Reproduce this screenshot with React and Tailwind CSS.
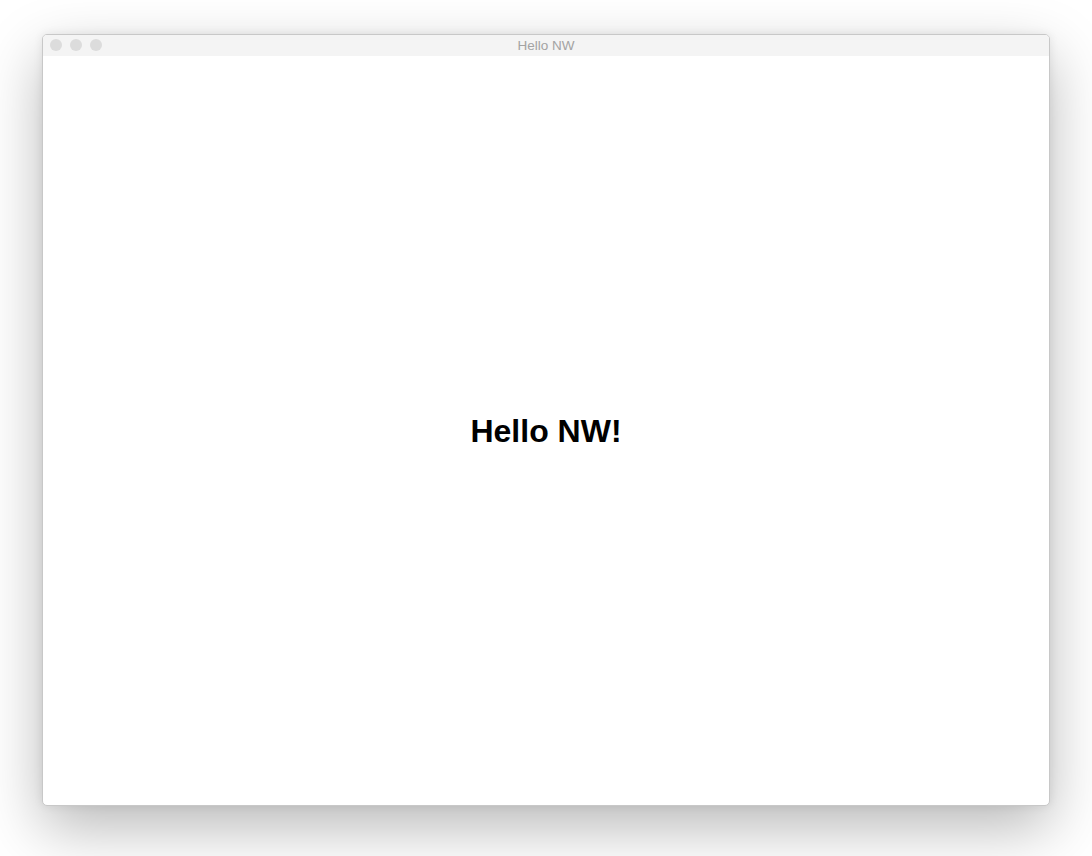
export default function App() {
  return (
    <div className="w-[1092px] h-[856px] bg-white pt-[34px] pl-[42px]" style={{ fontFamily: '"Liberation Sans", Arial, sans-serif' }}>
      <div className="w-[1008px] h-[772px] rounded-[5px] bg-white flex flex-col overflow-hidden border border-[#c8c8c8] shadow-[0_22px_60px_rgba(0,0,0,0.28),0_0_10px_rgba(0,0,0,0.08)]">
        <div className="relative h-[21px] bg-[#f4f4f4] flex items-center justify-center shrink-0">
          <div className="absolute left-[7px] top-[4px] flex gap-[8px]">
            <span className="w-[12px] h-[12px] rounded-full bg-[#dcdcdc]" />
            <span className="w-[12px] h-[12px] rounded-full bg-[#dcdcdc]" />
            <span className="w-[12px] h-[12px] rounded-full bg-[#dcdcdc]" />
          </div>
          <span className="text-[13.5px] text-[#a3a3a3] leading-none">Hello NW</span>
        </div>
        <div className="flex-1 flex items-center justify-center">
          <h1 className="text-[32px] font-bold text-black leading-none">Hello NW!</h1>
        </div>
      </div>
    </div>
  );
}
